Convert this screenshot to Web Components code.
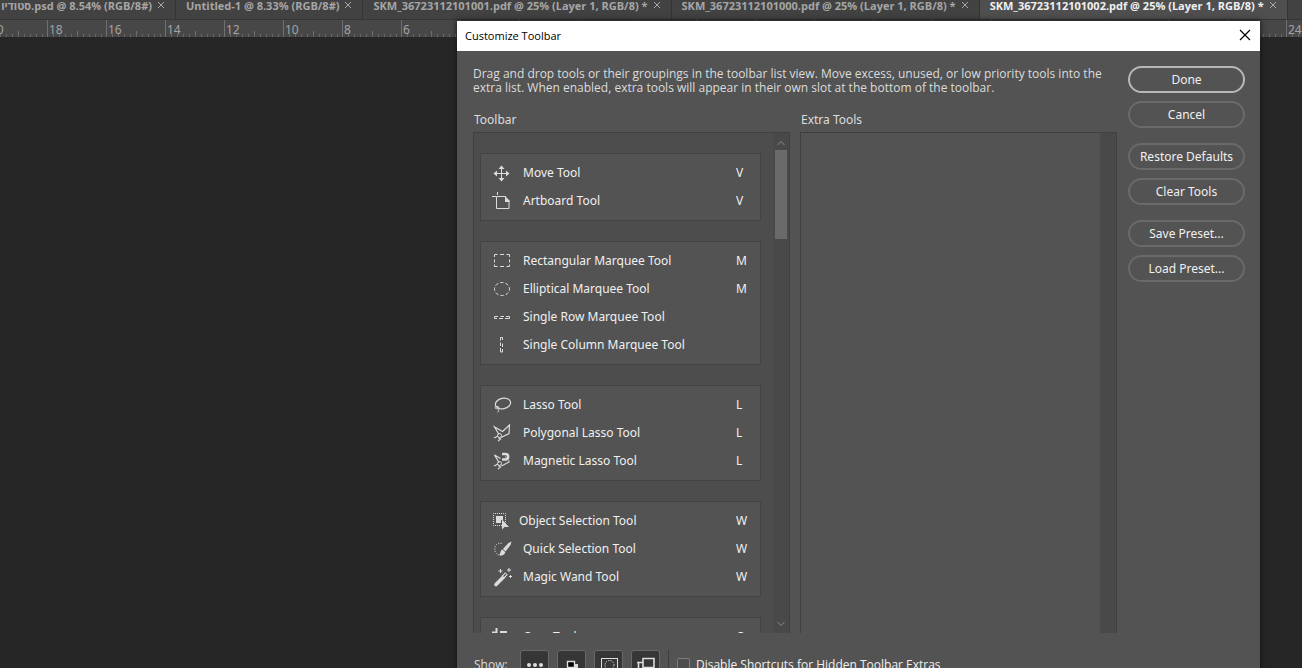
<!DOCTYPE html>
<html lang="en">
<head>
<meta charset="utf-8">
<title>Customize Toolbar</title>
<style>
  html, body { height: 100%; margin: 0; overflow: hidden; background: #262626; }
  body { font-family: "Noto Sans", "DejaVu Sans", sans-serif; font-size: 12px; color: #f0f0f0; }
</style>
</head>
<body>
<ps-workspace></ps-workspace>
<script>
const define = (name, html, setup) => {
  const template = document.createElement('template');
  template.innerHTML = html;
  customElements.define(name, class extends HTMLElement {
    connectedCallback() {
      if (this.shadowRoot) return;
      this.attachShadow({ mode: 'open' }).append(template.content.cloneNode(true));
      if (setup) setup(this, this.shadowRoot);
    }
  });
};

const ICONS = {
  move: '<path d="M10.5 5v13M4 11.5h13"/><path class="f" d="M10.5 3.5l3 3.5h-6zM10.5 19.5l3-3.5h-6zM2.5 11.5l3.500-3v6zM18.500 11.500l-3.500-3v6z"/>',
  artboard: '<path d="M1 6.500h4M6.500 2v3M5.500 8v10.500h12.500V11M5.500 8V6.500H15"/><path class="f" d="M14 6l4.500 4.500V12H14z"/>',
  rect: '<path d="M6.500 4.500h-3V7M3.500 9.500v3M3.500 14.500v2h3M9 4.500h4M9 16.500h4M15.500 4.500h3V7M18.500 9.500v3M18.500 14.500v2h-3"/>',
  ellipse: '<ellipse cx="11" cy="11" rx="7.500" ry="6.500" stroke-dasharray="3.400 2" stroke-dashoffset="1.700"/>',
  row: '<path d="M7 10.500H3.500v2H6M9.500 10.500H13M8 12.500h4M15 10.500h3.500v2H14"/>',
  column: '<path d="M9.500 6.500v-3h2V6M9.500 8.500V12M11.500 9.500V13M9.500 14v4h2v-3"/>',
  lasso: '<ellipse cx="12" cy="9.500" rx="7.700" ry="5.200" transform="rotate(-12 12 9.500)" stroke-width="1.200"/><path d="M5 12c-2 2 0 3.500 2 2.500s0-3-2-1.500M7 14.500c1.500 1 .5 3-.5 4"/>',
  poly: '<path d="M8 12.500L3.500 5l8 4.500 7-6.500-.5 8.500-8 4M3 16l4-2M7.500 15.500l2 1.500-2.500 2" stroke-width="1.200"/><circle cx="8.500" cy="13.500" r="2"/>',
  magnetic: '<path d="M8 12.500L3.500 5l6 3.500M18 10.500v1.500l-7.500 4M3 16l4-2M7.500 15.500l2 1.500-2.500 2" stroke-width="1.200"/><circle cx="8.500" cy="13.500" r="2"/><path d="M11 4h3.500c3.500 0 3.500 5.500 0 5.500H11" stroke-width="2.600"/><path d="M14 7h1"/>',
  object: '<rect x="2.500" y="3.500" width="12" height="12" stroke-dasharray="1 1" stroke-dashoffset=".5"/><path class="f" d="M5 6h7v4h-2v3H5zM11 9.500v10l2.500-2.500H18z"/>',
  quick: '<path d="M10.500 5.500a5 6 0 1 0 .5 11" stroke-dasharray="1.200 1.200"/><path class="f" d="M20.500 3.500l-1 3.500-5 6.500-2.500-2.500 5.500-6zM11.500 11.500l2.800 2.800c-.5 2.700-3.300 3.700-6.300 2.700 2-1 1-5 3.500-5.500z"/>',
  wand: '<path d="M5 18.500L13 10.500" stroke-width="3.600" stroke-linecap="round"/><path d="M12 11l3.500-3.500" stroke-width="3.600"/><path d="M12.500 10.500l2.500-2.500" stroke="#535353" stroke-width="1.200"/><path d="M9.500 3v4M7.500 5h4M18 2v4M16 4h4M19.500 9v3M18 10.500h3"/>',
  crop: '<path d="M5.500 2v14H19M1 6.500h4" stroke-width="2"/><path d="M9 6h6v14" stroke-width="2"/>',
  dots: '<circle class="f" cx="5" cy="11" r="2"/><circle class="f" cx="11" cy="11" r="2"/><circle class="f" cx="17" cy="11" r="2"/>',
  colors: '<path class="f" d="M9 10h8v8H9z"/><path d="M6.500 7.500h7v6h-7z" fill="#000" stroke-width="1.400"/>',
  mask: '<rect x="3.500" y="4.500" width="16" height="13"/><circle cx="11.500" cy="11" r="4.500" stroke-dasharray="1.200 1.200"/>',
  screen: '<path d="M8 4.500h11v9H8zM3.500 16V8.500H8M2 8.500h6" stroke-width="1.600"/>',
};

define('ps-icon', `<style>
  :host { display: block; flex: none; width: 22px; height: 22px; }
  :host([name=object]) { width: 18px; }
  svg { display: block; width: 22px; height: 22px; overflow: visible; fill: none; stroke: #dcdcdc; stroke-width: 1; }
  .f { fill: #dcdcdc; stroke: none; }
</style><svg viewBox="0 0 22 22" aria-hidden="true"></svg>`, (host, root) => {
  root.querySelector('svg').innerHTML = ICONS[host.getAttribute('name')];
});

define('ps-tab', `<style>
  :host { display: flex; flex: none; align-items: center; justify-content: flex-end; box-sizing: border-box;
    height: 28px; padding: 0 10px; gap: 5px; white-space: nowrap; font-family: "Open Sans", "Noto Sans", "DejaVu Sans", sans-serif; font-size: 11px; font-weight: 700;
    color: #a6a6a6; background: #424242; border-right: 1px solid #353535; }
  :host([active]) { background: #4f4f4f; color: #f0f0f0; }
  button { all: unset; display: block; width: 8px; height: 8px; color: #a8a8a8; }
  svg { display: block; width: 8px; height: 8px; }
</style><slot></slot><button aria-label="Close tab"><svg viewBox="0 0 8 8"><path d="M1 1l6 6M7 1L1 7" stroke="currentColor" fill="none"/></svg></button>`);

define('ps-tabs', `<style>
  :host { display: flex; height: 19px; align-items: flex-end; background: #424242; border-bottom: 1px solid #353535; overflow: hidden; }
  .clip { display: flex; height: 28px; }
  ps-tab:first-child { width: 176px; }
</style><div class="clip">
  <ps-tab><span dir="ltr">סטודיו.psd @ 8.54% (RGB/8#)</span></ps-tab>
  <ps-tab>Untitled-1 @ 8.33% (RGB/8#)</ps-tab>
  <ps-tab>SKM_36723112101001.pdf @ 25% (Layer 1, RGB/8) *</ps-tab>
  <ps-tab>SKM_36723112101000.pdf @ 25% (Layer 1, RGB/8) *</ps-tab>
  <ps-tab active>SKM_36723112101002.pdf @ 25% (Layer 1, RGB/8) *</ps-tab>
</div>`);

define('ps-ruler', `<style>
  :host { display: flex; height: 17px; background: #474747; overflow: hidden; color: #a3a3a3; font-size: 12px; line-height: 19px; }
  .cell { flex: none; box-sizing: border-box; width: 59px; height: 17px; border-left: 1px solid #707070; padding-left: 1px;
    background: repeating-linear-gradient(90deg, transparent 0 5px, #686868 5px 6px) 0 100% / 100% 3px no-repeat,
      linear-gradient(#707070, #707070) 29px 100% / 1px 6px no-repeat; }
  .cell:first-of-type { margin-left: -12px; }
</style>`, (host, root) => {
  /* Labels that the dialog covers are left blank. */
  for (let value = 20; value >= -24; value -= 2) {
    const cell = document.createElement('div');
    cell.className = 'cell';
    if (value > 4 || value < -22) cell.textContent = Math.abs(value);
    root.append(cell);
  }
});

define('ps-tool', `<style>
  :host { display: flex; align-items: center; height: 28px; padding: 0 4px 0 10px; }
  .name, .key { padding-bottom: 2px; }
  .name { flex: 1; margin-left: 10px; }
  .key { width: 20px; }
</style><ps-icon name="move"></ps-icon><span class="name"><slot></slot></span><span class="key"></span>`, (host, root) => {
  const icon = document.createElement('ps-icon');
  icon.setAttribute('name', host.getAttribute('icon'));
  root.querySelector('ps-icon').replaceWith(icon);
  root.querySelector('.key').textContent = host.getAttribute('key') || '';
});

define('ps-group', `<style>
  :host { display: block; padding: 5px 0; background: #535353; border: 1px solid #434343; }
</style><slot></slot>`);

define('ps-scrollbar', `<style>
  :host { display: flex; flex: none; flex-direction: column; align-items: center; width: 16px; background: #494949; }
  svg { flex: none; width: 8px; height: 17px; fill: none; stroke: #8a8a8a; }
  .track { flex: 1; width: 12px; }
  .thumb { height: 19%; background: #6a6a6a; }
  :host([empty]) svg, :host([empty]) .thumb { display: none; }
</style><svg viewBox="0 0 8 17"><path d="M.5 12L4 8.500 7.500 12"/></svg><div class="track"><div class="thumb"></div></div><svg viewBox="0 0 8 17"><path d="M.5 6L4 9.500 7.500 6"/></svg>`);

define('ps-list', `<style>
  :host { display: flex; flex: 1; flex-direction: column; min-width: 0; }
  h2 { margin: 0; padding-left: 1px; font-size: 12px; font-weight: 400; line-height: 16px; color: #dcdcdc; }
  .box { display: flex; margin-top: 4px; height: calc(100vh - 167px); box-sizing: border-box; overflow: hidden;
    border: 1px solid #404040; border-bottom: 0; background: #4d4d4d; }
  :host([empty]) .box { background: #535353; }
  .groups { display: flex; flex: 1; flex-direction: column; gap: 20px; padding: 20px 12px 0 6px; }
</style><h2></h2><div class="box"><div class="groups"><slot></slot></div></div>`, (host, root) => {
  root.querySelector('h2').textContent = host.getAttribute('heading');
  const bar = document.createElement('ps-scrollbar');
  if (host.hasAttribute('empty')) bar.setAttribute('empty', '');
  root.querySelector('.box').append(bar);
});

define('ps-button', `<style>
  :host { display: block; }
  button { display: block; width: 100%; height: 27px; padding: 0; box-sizing: border-box; border: 2px solid #6a6a6a; border-radius: 14px;
    background: #535353; color: #f0f0f0; font: inherit; }
  :host([primary]) button { border-color: #b8b8b8; }
</style><button type="button"><slot></slot></button>`);

define('ps-toggle', `<style>
  :host { display: block; }
  button { display: flex; align-items: center; justify-content: center; width: 29px; height: 29px; padding: 0; box-sizing: border-box;
    border: 1px solid #686868; border-radius: 3px; background: #363636; }
</style><button type="button"></button>`, (host, root) => {
  const button = root.querySelector('button');
  button.setAttribute('aria-label', host.getAttribute('label'));
  button.innerHTML = `<ps-icon name="${host.getAttribute('icon')}"></ps-icon>`;
});

define('ps-footer', `<style>
  :host { display: flex; height: 29px; padding-left: 1px; color: #dcdcdc; font-family: "Open Sans", "Noto Sans", sans-serif; }
  .show { width: 46px; line-height: 29px; }
  .toggles { display: flex; gap: 8px; }
  .rule { width: 1px; height: 29px; margin: 0 8px; background: #3e3e3e; }
  label { display: flex; align-items: center; gap: 6px; height: 29px; color: #f0f0f0; }
  input { appearance: none; width: 13px; height: 13px; margin: 0; border: 1px solid #7c7c7c; border-radius: 2px; background: #4c4c4c; }
</style><span class="show">Show:</span>
<div class="toggles">
  <ps-toggle icon="dots" label="Extras"></ps-toggle><ps-toggle icon="colors" label="Foreground and background colors"></ps-toggle>
  <ps-toggle icon="mask" label="Quick mask"></ps-toggle><ps-toggle icon="screen" label="Screen mode"></ps-toggle>
</div>
<span class="rule"></span>
<label><input type="checkbox">Disable Shortcuts for Hidden Toolbar Extras</label>`);

define('ps-dialog', `<style>
  :host { display: block; background: #535353; box-shadow: 0 0 6px #111; }
  header { display: flex; align-items: center; justify-content: space-between; height: 30px; padding: 0 9px 0 8px; background: #fff; color: #000; }
  h1 { margin: 0; padding-bottom: 2px; font-family: "Open Sans", "Noto Sans", sans-serif; font-size: 11px; font-weight: 400; }
  header button { all: unset; display: block; width: 12px; height: 12px; padding-bottom: 2px; }
  header svg { display: block; width: 12px; height: 12px; }
  .body { display: grid; grid-template-columns: minmax(0, 1fr) 117px; column-gap: 11px; padding: 15px 15px 0 16px; }
  main { padding-top: 1px; }
  p { margin: 0; font-family: "Open Sans", "Noto Sans", sans-serif; line-height: 14px; color: #dcdcdc; }
  .lists { display: flex; gap: 10px; margin-top: 17px; }
  .actions { display: flex; flex-direction: column; gap: 8px; }
  .gap { margin-top: 7px; }
  ps-footer { margin-top: 17px; }
</style>
<header><h1>Customize Toolbar</h1><button aria-label="Close"><svg viewBox="0 0 12 12"><path d="M1 1l10 10M11 1L1 11" stroke="#000" stroke-width="1.200"/></svg></button></header>
<div class="body">
  <main>
    <p>Drag and drop tools or their groupings in the toolbar list view. Move excess, unused, or low priority tools into the<br>extra list. When enabled, extra tools will appear in their own slot at the bottom of the toolbar.</p>
    <div class="lists">
      <ps-list heading="Toolbar">
        <ps-group><ps-tool icon="move" key="V">Move Tool</ps-tool><ps-tool icon="artboard" key="V">Artboard Tool</ps-tool></ps-group>
        <ps-group><ps-tool icon="rect" key="M">Rectangular Marquee Tool</ps-tool><ps-tool icon="ellipse" key="M">Elliptical Marquee Tool</ps-tool><ps-tool icon="row">Single Row Marquee Tool</ps-tool><ps-tool icon="column">Single Column Marquee Tool</ps-tool></ps-group>
        <ps-group><ps-tool icon="lasso" key="L">Lasso Tool</ps-tool><ps-tool icon="poly" key="L">Polygonal Lasso Tool</ps-tool><ps-tool icon="magnetic" key="L">Magnetic Lasso Tool</ps-tool></ps-group>
        <ps-group><ps-tool icon="object" key="W">Object Selection Tool</ps-tool><ps-tool icon="quick" key="W">Quick Selection Tool</ps-tool><ps-tool icon="wand" key="W">Magic Wand Tool</ps-tool></ps-group>
        <ps-group><ps-tool icon="crop" key="C">Crop Tool</ps-tool></ps-group>
      </ps-list>
      <ps-list heading="Extra Tools" empty></ps-list>
    </div>
    <ps-footer></ps-footer>
  </main>
  <div class="actions">
    <ps-button primary>Done</ps-button><ps-button>Cancel</ps-button>
    <ps-button class="gap">Restore Defaults</ps-button><ps-button>Clear Tools</ps-button>
    <ps-button class="gap">Save Preset...</ps-button><ps-button>Load Preset...</ps-button>
  </div>
</div>`);

define('ps-workspace', `<style>
  :host { display: block; position: relative; height: 100vh; overflow: hidden; background: #262626; }
  ps-dialog { position: absolute; top: 21px; left: 457px; right: 42px; bottom: -20px; }
</style><ps-tabs></ps-tabs><ps-ruler></ps-ruler><ps-dialog></ps-dialog>`);
</script>
</body>
</html>
